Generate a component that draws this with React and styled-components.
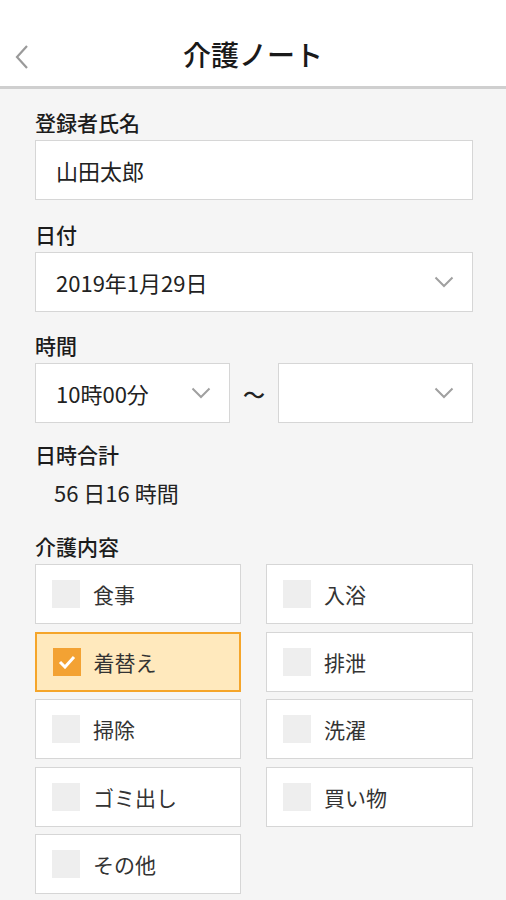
import React, { useState } from "react";
import styled, { createGlobalStyle } from "styled-components";

const GlobalStyle = createGlobalStyle`
  html, body {
    margin: 0;
    padding: 0;
    background: #f5f5f5;
    font-family: "Noto Sans CJK JP", "Noto Sans", sans-serif;
    color: #222;
  }
`;

const Page = styled.div`
  width: 506px;
  min-height: 900px;
  background: #f5f5f5;
`;

const Header = styled.header`
  height: 86px;
  background: #fff;
  border-bottom: 3px solid #cfcfcf;
  display: flex;
  align-items: center;
  justify-content: center;
  position: relative;
`;

const BackButton = styled.button`
  position: absolute;
  left: 10px;
  top: 42px;
  width: 24px;
  height: 30px;
  border: 0;
  padding: 0;
  background: none;
  display: flex;
  align-items: center;
  justify-content: center;
`;

const Title = styled.h1`
  margin: 22px 0 0;
  font-size: 28px;
  font-weight: 500;
  color: #1a1a1a;
`;

const Form = styled.div`
  padding: 19px 33px 20px 35px;
  display: flex;
  flex-direction: column;
`;

const Label = styled.div`
  font-size: 21px;
  line-height: 28px;
  font-weight: 500;
  color: #1c1c1c;
  margin-top: ${(p) => p.$gap || 0}px;
  margin-bottom: 4px;
`;

const Box = styled.div`
  box-sizing: border-box;
  height: 60px;
  background: #fff;
  border: 1.5px solid #d6d6d6;
  display: flex;
  align-items: center;
  justify-content: space-between;
  padding: 0 18px 0 20px;
  font-size: 22px;
  color: #222;
  flex: ${(p) => (p.$grow ? 1 : "none")};
`;

const TimeRow = styled.div`
  display: flex;
  align-items: center;
  gap: 12px;
`;

const Tilde = styled.span`
  font-size: 22px;
  font-weight: 500;
  width: 24px;
  text-align: center;
`;

const Total = styled.div`
  font-size: 22px;
  line-height: 28px;
  padding-left: 19px;
  margin-top: 6px;
`;

const Grid = styled.div`
  display: grid;
  grid-template-columns: 206px 207px;
  column-gap: 25px;
  row-gap: 7.5px;
`;

const Option = styled.label`
  box-sizing: border-box;
  height: 60px;
  display: flex;
  align-items: center;
  gap: 13px;
  padding-left: 16px;
  background: ${(p) => (p.$checked ? "#ffe9bd" : "#fff")};
  border: ${(p) => (p.$checked ? "2px solid #f5a52a" : "1.5px solid #d6d6d6")};
  font-size: 21px;
  color: #333;
  cursor: pointer;
`;

const Check = styled.span`
  width: 28px;
  height: 28px;
  background: ${(p) => (p.$checked ? "#f3a233" : "#eeeeee")};
  display: flex;
  align-items: center;
  justify-content: center;
  margin-left: ${(p) => (p.$checked ? "-0.5px" : "0")};
`;

const Chevron = () => (
  <svg width="20" height="12" viewBox="0 0 20 12">
    <path d="M1.5 1.5 L10 10 L18.5 1.5" fill="none" stroke="#a0a0a0" strokeWidth="2" />
  </svg>
);

const items = ["食事", "入浴", "着替え", "排泄", "掃除", "洗濯", "ゴミ出し", "買い物", "その他"];

export default function App() {
  const [checked, setChecked] = useState({ 着替え: true });
  const toggle = (k) => setChecked({ ...checked, [k]: !checked[k] });

  return (
    <Page>
      <GlobalStyle />
      <Header>
        <BackButton>
          <svg width="16" height="26" viewBox="0 0 16 26">
            <path d="M13 2 L3 13 L13 24" fill="none" stroke="#9a9a9a" strokeWidth="2.2" />
          </svg>
        </BackButton>
        <Title>介護ノート</Title>
      </Header>
      <Form>
        <Label>登録者氏名</Label>
        <Box>山田太郎</Box>

        <Label $gap={20}>日付</Label>
        <Box>
          <span>2019年1月29日</span>
          <Chevron />
        </Box>

        <Label $gap={19}>時間</Label>
        <TimeRow>
          <Box $grow>
            <span>10時00分</span>
            <Chevron />
          </Box>
          <Tilde>〜</Tilde>
          <Box $grow>
            <span />
            <Chevron />
          </Box>
        </TimeRow>

        <Label $gap={17}>日時合計</Label>
        <Total>56 日16 時間</Total>

        <Label $gap={26}>介護内容</Label>
        <Grid>
          {items.map((k) => (
            <Option key={k} $checked={!!checked[k]} onClick={() => toggle(k)}>
              <Check $checked={!!checked[k]}>
                {checked[k] && (
                  <svg width="18" height="14" viewBox="0 0 18 14">
                    <path d="M2 7 L7 12 L16 2" fill="none" stroke="#fff" strokeWidth="3" />
                  </svg>
                )}
              </Check>
              {k}
            </Option>
          ))}
        </Grid>
      </Form>
    </Page>
  );
}
